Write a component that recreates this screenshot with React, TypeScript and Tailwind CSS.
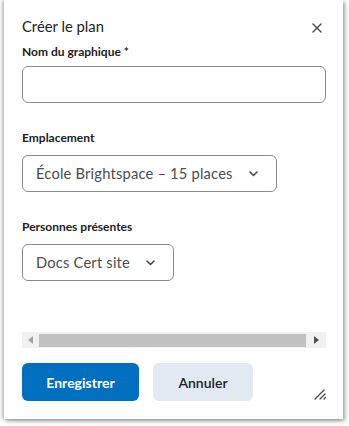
import { X } from "lucide-react";

function Chevron() {
  return (
    <svg width="9" height="6" viewBox="0 0 9 6" fill="none" className="shrink-0">
      <path d="M1 1l3.5 3.5L8 1" stroke="#494c4e" strokeWidth="1.6" strokeLinecap="round" strokeLinejoin="round" />
    </svg>
  );
}

function SelectBox({ value, width }: { value: string; width: string }) {
  return (
    <div
      className={`${width} h-[37px] flex items-center justify-between pl-[13px] pr-[18px] rounded-[6px] border border-[#868c8f] bg-white`}
    >
      <span className="text-[14.7px] text-[#494c4e] tracking-[0.2px]">{value}</span>
      <Chevron />
    </div>
  );
}

export default function App() {
  return (
    <div className="w-[349px] h-[426px] bg-white pl-[4px] font-['Lato',sans-serif] overflow-hidden">
      <div className="relative w-[339px] h-[419px] bg-white pl-[18px] pr-[17px] pt-[16px] shadow-[2px_2px_4px_rgba(0,0,0,0.35),-2px_0_4px_rgba(0,0,0,0.25)]">
        {/* Header */}
        <div className="flex items-start justify-between h-[24px]">
          <h2 className="text-[14.8px] leading-[20px] text-[#202122]">Créer le plan</h2>
          <button className="mt-[4px] mr-[1px] text-[#494c4e]">
            <X className="w-[16px] h-[16px]" strokeWidth={2.2} />
          </button>
        </div>

        {/* Nom du graphique */}
        <label className="block mt-[3px] text-[12px] leading-[18px] font-bold text-[#202122]">
          Nom du graphique *
        </label>
        <div className="mt-[5px] h-[37px] rounded-[6px] border border-[#868c8f] bg-white" />

        {/* Emplacement */}
        <label className="block mt-[26px] text-[12px] leading-[18px] font-bold text-[#202122]">
          Emplacement
        </label>
        <div className="mt-[8px]">
          <SelectBox value="École Brightspace – 15 places" width="w-[255px]" />
        </div>

        {/* Personnes présentes */}
        <label className="block mt-[26px] text-[12px] leading-[18px] font-bold text-[#202122]">
          Personnes présentes
        </label>
        <div className="mt-[8px]">
          <SelectBox value="Docs Cert site" width="w-[152px]" />
        </div>

        {/* Scrollbar */}
        <div className="mt-[51px] h-[16px] bg-[#f1f1f1] flex items-center">
          <div className="w-[17px] flex justify-center">
            <svg width="5" height="8" viewBox="0 0 5 8">
              <path d="M5 0L0 4l5 4z" fill="#a3a3a3" />
            </svg>
          </div>
          <div className="flex-1 h-[13px] bg-[#c1c1c1]" />
          <div className="w-[20px] flex justify-center">
            <svg width="5" height="8" viewBox="0 0 5 8">
              <path d="M0 0l5 4-5 4z" fill="#505050" />
            </svg>
          </div>
        </div>

        {/* Buttons */}
        <div className="mt-[15px] flex gap-[14px]">
          <button className="w-[117px] h-[38px] rounded-[6px] bg-[#006fbf] text-white text-[14px] font-bold">
            Enregistrer
          </button>
          <button className="w-[100px] h-[38px] rounded-[6px] bg-[#e3e9f1] text-[#202122] text-[14px] font-semibold">
            Annuler
          </button>
        </div>

        {/* Resize grip */}
        <svg className="absolute right-[17px] bottom-[19px]" width="12" height="11" viewBox="0 0 12 11">
          <path d="M1 10L10 1M6 10L11 5M10 10l1.5-1.5" stroke="#494c4e" strokeWidth="1.4" strokeLinecap="round" />
        </svg>
      </div>
    </div>
  );
}
